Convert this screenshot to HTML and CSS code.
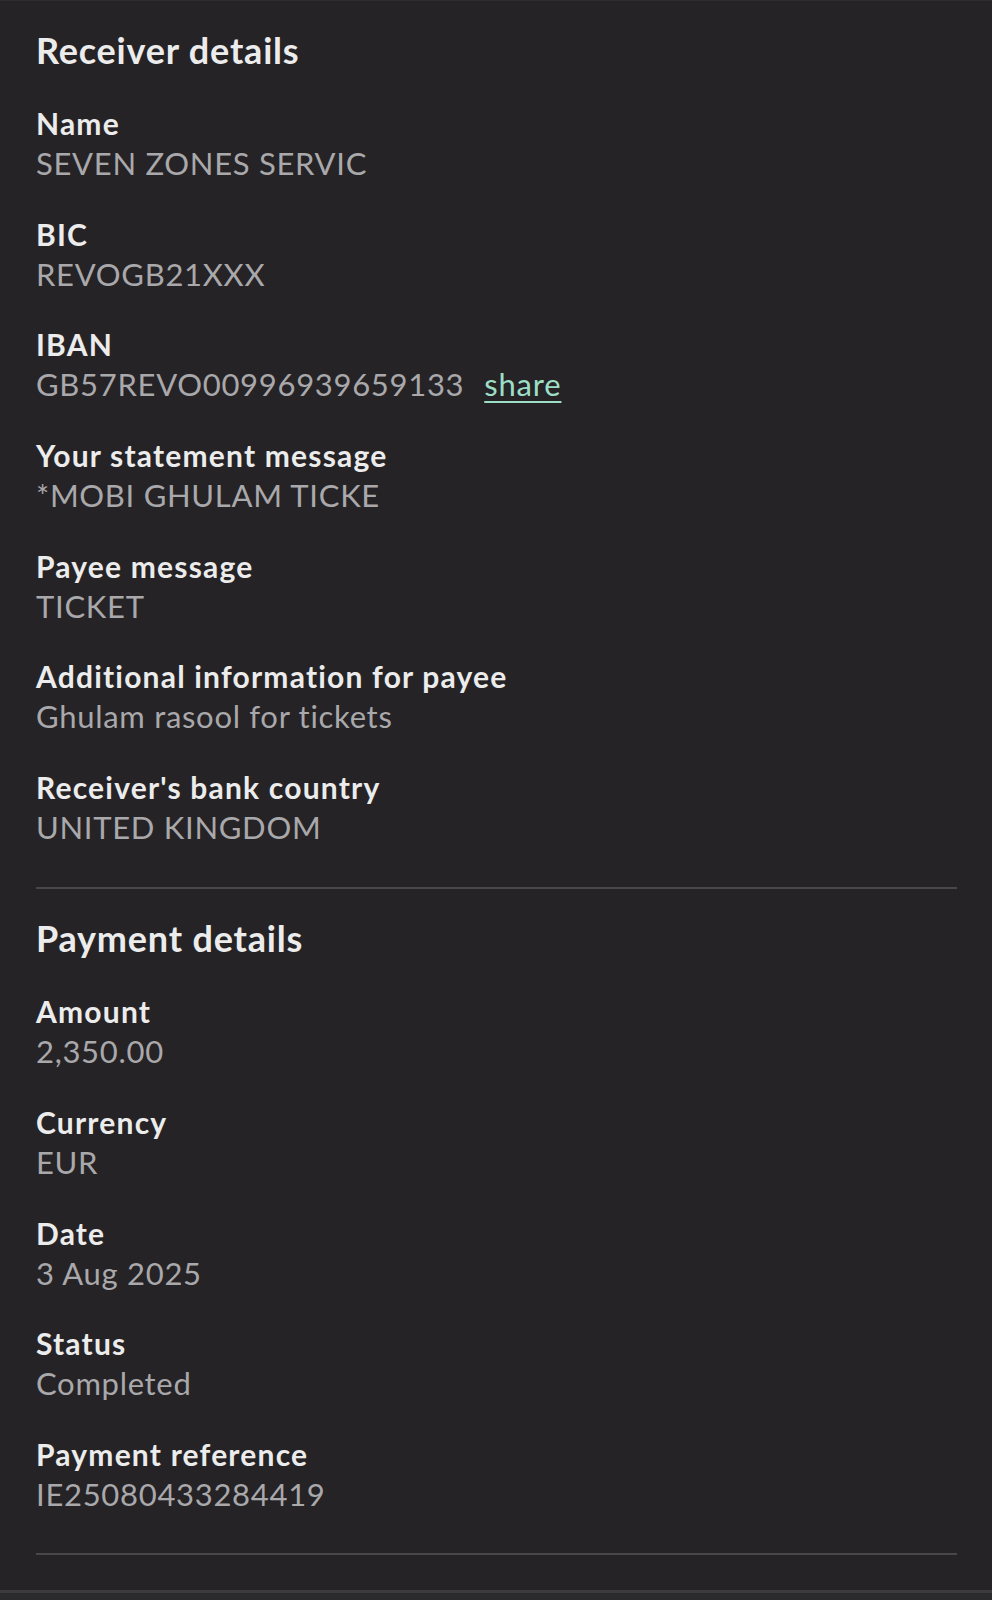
FILE: index.html
```html
<!DOCTYPE html>
<html lang="en">
<head>
<meta charset="utf-8">
<title>Transfer details</title>
<link rel="stylesheet" href="styles.css">
</head>
<body>
<main class="page">
  <section class="section section-first">
    <h2 class="section-title">Receiver details</h2>
    <dl class="rows">
      <div class="row"><dt class="label">Name</dt><dd class="value">SEVEN ZONES SERVIC</dd></div>
      <div class="row"><dt class="label">BIC</dt><dd class="value">REVOGB21XXX</dd></div>
      <div class="row"><dt class="label">IBAN</dt><dd class="value">GB57REVO00996939659133<a class="share" href="#">share</a></dd></div>
      <div class="row"><dt class="label">Your statement message</dt><dd class="value">*MOBI GHULAM TICKE</dd></div>
      <div class="row"><dt class="label">Payee message</dt><dd class="value">TICKET</dd></div>
      <div class="row"><dt class="label">Additional information for payee</dt><dd class="value">Ghulam rasool for tickets</dd></div>
      <div class="row"><dt class="label">Receiver's bank country</dt><dd class="value">UNITED KINGDOM</dd></div>
    </dl>
  </section>
  <section class="section">
    <h2 class="section-title">Payment details</h2>
    <dl class="rows">
      <div class="row"><dt class="label">Amount</dt><dd class="value">2,350.00</dd></div>
      <div class="row"><dt class="label">Currency</dt><dd class="value">EUR</dd></div>
      <div class="row"><dt class="label">Date</dt><dd class="value">3 Aug 2025</dd></div>
      <div class="row"><dt class="label">Status</dt><dd class="value">Completed</dd></div>
      <div class="row"><dt class="label">Payment reference</dt><dd class="value">IE25080433284419</dd></div>
    </dl>
  </section>
  <div class="footer-band"></div>
</main>
</body>
</html>
```

FILE: styles.css
```css
* { box-sizing: border-box; }
html, body {
  margin: 0;
  padding: 0;
  background: #252326;
}
body {
  font-family: Lato, "Open Sans", "Liberation Sans", sans-serif;
  color: #ececec;
  font-variant-ligatures: none;
}
.page {
  min-height: 1600px;
  display: flex;
  flex-direction: column;
  border-top: 1px solid #2e2d30;
}
.section {
  margin: 0 35px 0 36px;
  padding: 27px 0 39px;
  border-bottom: 2px solid #48474a;
}
.section-first {
  padding-top: 27px;
  padding-bottom: 40px;
}
.section-title {
  margin: 0 0 31px;
  font-size: 36px;
  line-height: 44px;
  font-weight: 700;
  color: #ececec;
  letter-spacing: 0.8px;
}
.rows {
  margin: 0;
  display: flex;
  flex-direction: column;
  gap: 30.7px;
}
.row {
  display: flex;
  flex-direction: column;
}
.label {
  font-size: 30px;
  line-height: 40px;
  font-weight: 700;
  color: #ececec;
  letter-spacing: 1.2px;
}
.value {
  margin: 0;
  font-size: 31px;
  line-height: 40px;
  font-weight: 400;
  color: #a9a8ab;
  letter-spacing: 0.7px;
}
.share {
  margin-left: 20px;
  color: #9ddfc6;
  text-decoration: underline;
  text-underline-offset: 5px;
  text-decoration-thickness: 2px;
  letter-spacing: 0.8px;
}
.footer-band {
  margin-top: 35px;
  flex: 1;
  background: #2b2a2d;
  border-top: 3px solid #3b3a3d;
}
```
